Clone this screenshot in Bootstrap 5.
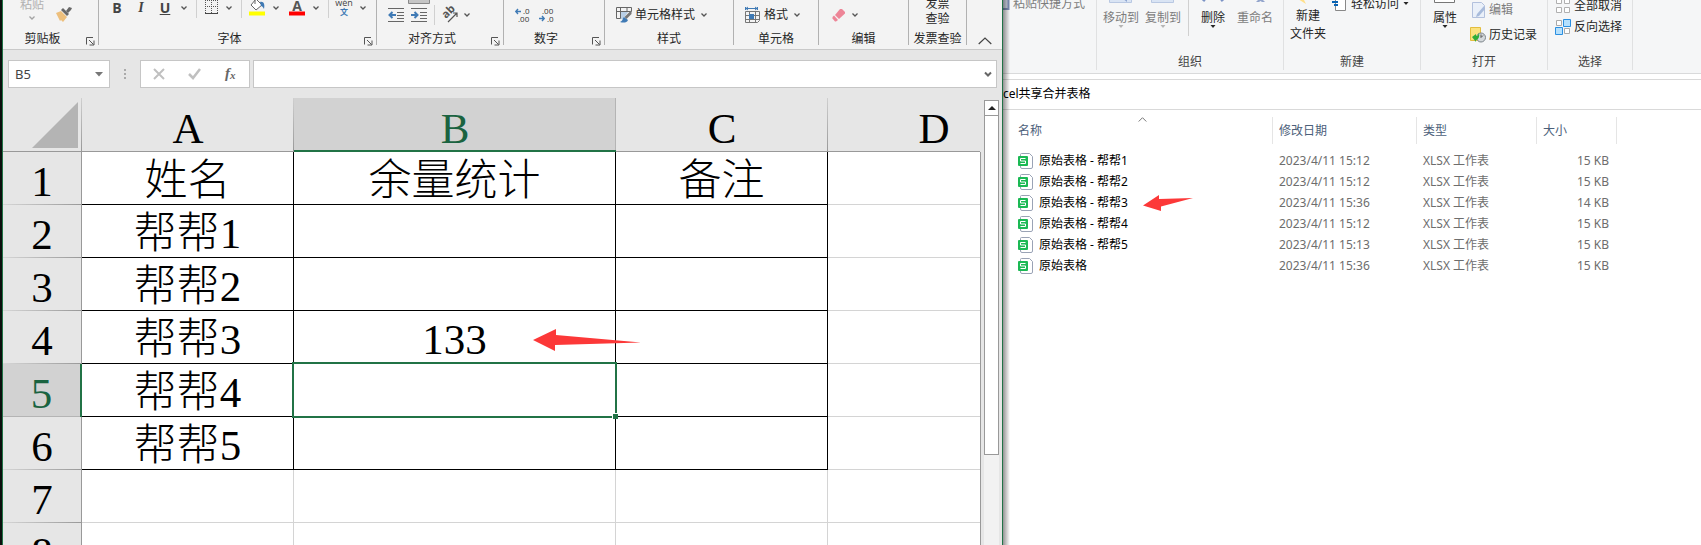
<!DOCTYPE html>
<html lang="zh-CN">
<head>
<meta charset="utf-8">
<meta name="viewport" content="width=device-width, initial-scale=1">
<title>Excel共享合并表格</title>
<link rel="stylesheet" href="https://cdn.jsdelivr.net/npm/bootstrap@5.3.0/dist/css/bootstrap.min.css">
<style>
  body { font-family: "Noto Sans", "Noto Sans CJK SC", sans-serif; font-size: 12px; line-height: 18px; color: #262626; background: #fff; }
  svg { display: block; flex: none; overflow: visible; }
  button { border: 0; padding: 0; background: none; color: inherit; white-space: nowrap; }
  .desktop { display: grid; grid-template-columns: minmax(0, 1003fr) minmax(0, 698fr); height: 100vh; overflow: hidden; }

  /* spreadsheet window */
  .book { border-left: 1px solid #1f7246; border-right: 1px solid #1f7246; margin-left: 2px; background: #e6e6e6; overflow: hidden; }
  .strip { background: #0b0f0d; }
  .ribbon { display: grid; grid-template-columns: 96fr 278fr 127fr 101fr 129fr 85fr 90fr 58fr 35fr; height: 50px; background: #f3f3f3; border-bottom: 1px solid #c9c9c9; }
  .grp { display: flex; flex-direction: column; min-width: 0; height: 45px; border-right: 1px solid #b1b1b1; }
  .grp:last-child { border: 0; }
  .tools { display: flex; align-items: center; height: 30px; flex: none; padding-left: 11px; gap: 8px; }
  .tools.upper { height: 15px; padding-left: 9px; gap: 6px; margin-bottom: 15px; }
  .tools.cutoff { height: 22px; align-items: flex-end; margin-bottom: 8px; }
  .tools.clip { padding-left: 17px; gap: 12px; }
  .tools.stack { height: 26px; padding: 0; margin-bottom: 4px; line-height: 15px; justify-content: center; }
  .cap { position: relative; text-align: center; line-height: 18px; height: 18px; }
  .cap svg { position: absolute; right: 3px; bottom: 2px; }
  .split { display: flex; align-items: center; gap: 3px; }
  .upper .split { gap: 4px; }
  .glyph { width: 18px; font: bold 14px/15px "Open Sans", sans-serif; color: #444; text-align: center; }
  .vsep { width: 1px; height: 20px; background: #d0d0d0; flex: none; }
  .upper .vsep { height: 18px; align-self: flex-end; margin-bottom: -3px; }

  .fbar { display: flex; align-items: stretch; height: 48px; padding: 10px 5px; }
  .fbox { border: 1px solid #c6c6c6; background: #fff; border-radius: 0; }
  .namebox { width: 102px; display: flex; align-items: center; padding-right: 6px; }
  .namebox input { border: 0; padding: 0 0 0 6px; min-width: 0; flex: 1; font-size: 13px; color: #444; background: none; }
  .fbtns { width: 110px; display: flex; align-items: center; justify-content: space-between; padding: 0 12px; }
  .finput { flex: 1; min-width: 0; display: flex; align-items: center; padding-right: 4px; margin-left: 3px; }
  .finput input { border: 0; flex: 1; min-width: 0; }
  input:focus { outline: 0; }

  .sheetwrap { display: flex; height: calc(100vh - 98px); }
  .sheet { flex: 1; min-width: 0; overflow: hidden; background: #fff; }
  .cells { table-layout: fixed; width: 1037px; border-collapse: separate; border-spacing: 0; font-family: "Liberation Serif", "Noto Sans CJK SC", serif; font-size: 43px; line-height: 52px; font-weight: 300; color: #000; text-align: center; }
  .cells th, .cells td { position: relative; height: 53px; padding: 0; font-weight: 300; border-right: 1px solid #d4d4d4; border-bottom: 1px solid #d4d4d4; }
  .cells td > span, .cells tbody th > span { display: block; height: 52px; line-height: 58px; white-space: nowrap; }
  .cells th { background: #e6e6e6; font-weight: 400; }
  .cells thead th { height: 54px; border-bottom-color: #999; border-right: 0; }
  .cells thead th > span { display: block; height: 53px; line-height: 61px; }
  .cells thead th { background: linear-gradient(#cfcfcf, #999) right / 1px 100% no-repeat, #e6e6e6; }
  .cells tbody th { border-right-color: #999; border-bottom: 0; background: linear-gradient(90deg, #d6d6d6, #999) bottom / 100% 1px no-repeat, #e6e6e6; }
  .cells .inked td:nth-child(-n+4) { border-color: #000; }
  .cells thead th.hot { background: linear-gradient(#b4b4b4, #b4b4b4) right / 1px 100% no-repeat, #d2d2d2; color: #1a6340; border-bottom: 2px solid #217346; }
  .cells thead th.hot > span { height: 52px; }
  .cells tbody th.hot { background: linear-gradient(#b4b4b4, #b4b4b4) bottom / 100% 1px no-repeat, #d2d2d2; color: #1a6340; border-right: 2px solid #217346; }
  .cells thead th.corner::after { content: ""; position: absolute; right: 4px; bottom: 3px; width: 46px; height: 46px; background: #b4b4b4; clip-path: polygon(100% 0, 100% 100%, 0 100%); }
  .active::before { content: ""; position: absolute; inset: -2px; border: 2px solid #217346; z-index: 1; }
  .active::after { content: ""; position: absolute; right: -3px; bottom: -3px; width: 5px; height: 5px; background: #217346; box-shadow: -1px -1px 0 #fff; z-index: 2; }
  .mark-b { position: absolute; right: -26px; top: 18px; z-index: 3; }
  .rail { width: 22px; padding: 2px 4px 0; background: linear-gradient(#999, #999) 0 54px / 1px 100% no-repeat, #e6e6e6; display: flex; flex-direction: column; }
  .rail > * { width: 15px; }
  .up { height: 16px; border: 1px solid #999; background: #fff; display: flex; align-items: center; justify-content: center; flex: none; }
  .track { flex: 1; background: #f2f2f2; }
  .thumb { height: 79%; background: #fff; border: 1px solid #999; border-top: 0; }

  /* file manager window */
  .files { position: relative; background: #fff; overflow: hidden; }
  .files::before { content: ""; position: absolute; inset: 0 auto 0 0; width: 7px; background: linear-gradient(90deg, rgba(0,0,0,.42), rgba(0,0,0,0)); z-index: 2; }
  .fribbon { display: grid; grid-template-columns: 94fr 187fr 137fr 127fr 85fr 68fr; height: 74px; background: #f5f6f7; border-bottom: 1px solid #d9dadb; }
  .fgrp { height: 70px; min-width: 0; border-right: 1px solid #e0e1e2; display: flex; flex-direction: column; }
  .fgrp:last-child { border: 0; }
  .fbody { display: flex; align-items: flex-end; height: 43px; flex: none; gap: 6px; padding-left: 6px; margin-bottom: 10px; }
  .fbody.open { gap: 13px; padding-left: 12px; }
  .fbody.pick { padding: 0 0 8px 7px; }
  .fbody .vsep { height: 36px; margin: 0 0 7px 1px; }
  .fcap { text-align: center; color: #444; line-height: 18px; }
  .tall { display: flex; flex-direction: column; align-items: center; line-height: 14px; margin-bottom: 14px; }
  .tall svg:first-child { margin-bottom: 8px; }
  .tall.two { line-height: 18px; margin-bottom: 0; }
  .tall.two svg:first-child { margin-bottom: 3px; }
  .tall.bare { margin-bottom: 18px; }
  .tall.wide { width: 36px; }
  .line { display: flex; align-items: center; gap: 3px; line-height: 17px; height: 17px; }
  .raised { margin-bottom: 31px; }
  .off { color: #7d7d7d; }
  .off svg:last-child { color: #b5b5b5; }
  .addr { margin-top: 5px; height: 31px; border: solid #d9d9d9; border-width: 1px 0; line-height: 28px; color: #000; white-space: nowrap; }
  .listing { table-layout: fixed; width: 100%; color: #6d6d6d; border-collapse: collapse; }
  .listing th { position: relative; height: 40px; padding: 2px 0 0 6px; font-weight: 400; color: #4c607a; background: linear-gradient(#e5e5e5, #e5e5e5) right / 1px 27px no-repeat; }
  .listing th:first-child { padding-left: 15px; }
  .listing th:last-child { background: none; }
  .listing td { height: 21px; padding: 0 0 0 6px; line-height: 20px; white-space: nowrap; }
  .listing td:first-child { padding-left: 15px; color: #000; }
  .listing td:nth-child(4) { text-align: right; padding-right: 8px; }
  .entry { display: flex; align-items: center; height: 20px; gap: 5px; }
  .entry a { color: inherit; text-decoration: none; }
  .entry .pointer { margin-left: 10px; }
  .caret-up { position: absolute; left: 135px; top: 7px; }
</style>
</head>
<body>
<svg width="0" height="0" class="position-absolute" aria-hidden="true">
  <defs>
    <symbol id="chev" viewBox="0 0 12 8"><path d="M3.500 2.500 6 5l2.500-2.500" fill="none" stroke="#555" stroke-width="1.300"/></symbol>
    <symbol id="launch" viewBox="0 0 9 9"><path d="M.5 7.500V.5H7M3 3l4.500 4.500M8 3.500V8H3.500" fill="none" stroke="#555"/></symbol>
    <symbol id="tri" viewBox="0 0 8 4"><path d="M1.500 0h5L4 3z" fill="currentColor"/></symbol>
    <symbol id="wps" viewBox="0 0 16 16"><path d="M3.500.5h8l3 3v10.500q0 1.500-1.500 1.500h-9q-1.500 0-1.500-1.500V1.500q0-1 1-1z" fill="#fff" stroke="#9aa3b5"/><rect y="3" width="10" height="10" rx="1" fill="#1bb954"/><path d="M7.500 5.500h-5V8h5v2.500h-5" fill="none" stroke="#fff"/></symbol>
  </defs>
</svg>

<div class="desktop">
  <div class="strip">
  <main class="book h-100">
    <div class="ribbon">
      <section class="grp">
        <div class="tools cutoff clip">
          <button class="d-flex flex-column align-items-center" style="color:#b1b1b1"><span>粘贴</span><svg width="12" height="8" opacity=".5"><use href="#chev"/></svg></button>
          <button aria-label="格式刷"><svg width="16" height="16" viewBox="0 0 16 16"><path d="M0 7l5-2 6 6-4 5-2-2-1 1z" fill="#edbf7c"/><path d="M5 4l2-2 6 6-2 2z" fill="#686868"/><path d="M10 5l3-4 3 1-1 2-3 3z" fill="#686868"/></svg></button>
        </div>
        <div class="cap pe-3">剪贴板<svg width="9" height="9"><use href="#launch"/></svg></div>
      </section>
      <section class="grp">
        <div class="tools upper">
          <button class="glyph">B</button>
          <button class="glyph fst-italic" style="font-family:'Liberation Serif',serif">I</button>
          <span class="split"><button class="glyph text-decoration-underline">U</button><button aria-label="下划线选项"><svg width="12" height="8"><use href="#chev"/></svg></button></span>
          <i class="vsep"></i>
          <span class="split"><button aria-label="边框"><svg width="16" height="15" viewBox="0 0 16 15"><path d="M2.500 0v13M8.500 0v13M14.500 0v13M2 6.500h13M2 .5h13" stroke="#555" stroke-dasharray="1 1" fill="none"/><path d="M2 13.500h13" stroke="#444"/></svg></button><button aria-label="边框选项"><svg width="12" height="8"><use href="#chev"/></svg></button></span>
          <i class="vsep"></i>
          <span class="split"><button aria-label="填充颜色"><svg width="18" height="15" viewBox="0 0 18 15"><path d="M8-1l6 6-6 5-5-5z" fill="#fff" stroke="#666"/><path d="M7 4V-2" stroke="#666"/><path d="M12 2c4-1 5 3 4 7-1-2-2-3-3-3z" fill="#3f7ab5"/><path d="M1 11.500h16v4H1z" fill="#ff0"/></svg></button><button aria-label="填充选项"><svg width="12" height="8"><use href="#chev"/></svg></button></span>
          <span class="split"><button aria-label="字体颜色"><svg width="18" height="15" viewBox="0 0 18 15"><text x="9" y="11" text-anchor="middle" font-size="14" font-family="Open Sans" font-weight="700" fill="#555">A</text><path d="M1 11.500h16v4H1z" fill="red"/></svg></button><button aria-label="颜色选项"><svg width="12" height="8"><use href="#chev"/></svg></button></span>
          <i class="vsep"></i>
          <span class="split"><button aria-label="拼音"><svg width="18" height="15" viewBox="0 0 18 15"><text x="9" y="6" text-anchor="middle" font-size="9" font-family="Open Sans" fill="#444">wén</text><text x="9" y="15" text-anchor="middle" font-size="8" font-weight="700" font-family="Noto Sans CJK SC" fill="#3f7ab5">文</text></svg></button><button aria-label="拼音选项"><svg width="12" height="8"><use href="#chev"/></svg></button></span>
        </div>
        <div class="cap pe-3">字体<svg width="9" height="9"><use href="#launch"/></svg></div>
      </section>
      <section class="grp">
        <div class="tools" style="gap:7px">
          <button aria-label="减少缩进"><svg width="16" height="14" viewBox="0 0 16 14"><path d="M0 .5h16M9 4.500h7M9 7.500h7M9 10.500h7M0 13.500h16" stroke="#666"/><path d="M8 7H2M4.500 4L1.500 7l3 3" stroke="#3f7ab5" stroke-width="2" fill="none"/></svg></button>
          <button aria-label="增加缩进"><svg width="16" height="14" viewBox="0 0 16 14"><path d="M-2.500-12h21v7.500h-21z" fill="#c5c5c5" stroke="#888"/><path d="M0 .5h16M9 4.500h7M9 7.500h7M9 10.500h7M0 13.500h16" stroke="#666"/><path d="M0 7h6M3.500 4l3 3-3 3" stroke="#3f7ab5" stroke-width="2" fill="none"/></svg></button>
          <i class="vsep"></i>
          <span class="split"><button aria-label="方向"><svg width="16" height="14" viewBox="0 0 16 14"><text transform="translate(4 11) rotate(-45)" font-size="11" font-weight="700" font-family="Open Sans" fill="#555">ab</text><path d="M6 14l9-9M11 5h4v4" fill="none" stroke="#555" stroke-width="1.200"/></svg></button><button aria-label="方向选项"><svg width="12" height="8"><use href="#chev"/></svg></button></span>
        </div>
        <div class="cap pe-3">对齐方式<svg width="9" height="9"><use href="#launch"/></svg></div>
      </section>
      <section class="grp">
        <div class="tools">
          <button aria-label="增加小数位数"><svg width="16" height="14" viewBox="0 0 16 14" font-size="8" font-family="Open Sans" fill="#333"><text x="8" y="6">.0</text><text x="3" y="14">.00</text><path d="M6 3.500H1M3 1L.8 3.500 3 6" stroke="#3f7ab5" stroke-width="1.400" fill="none"/></svg></button>
          <button aria-label="减少小数位数"><svg width="16" height="14" viewBox="0 0 16 14" font-size="8" font-family="Open Sans" fill="#333"><text x="3" y="6">.00</text><text x="8" y="14">.0</text><path d="M0 10.500h5M3 8l2.200 2.500L3 13" stroke="#3f7ab5" stroke-width="1.400" fill="none"/></svg></button>
        </div>
        <div class="cap pe-3">数字<svg width="9" height="9"><use href="#launch"/></svg></div>
      </section>
      <section class="grp">
        <div class="tools">
          <button class="split"><svg width="16" height="16" viewBox="0 0 16 16"><path d="M.5.5h15v4M.5.5v11h4M.5 4.500h15M4.500.5v11M11 .5v4" fill="none" stroke="#666"/><path d="M5 5h7l-5 7H5z" fill="#b9cfe6"/><path d="M15.500 3v4l-5 5-2-2z" fill="#777"/><path d="M8 10l4 3c-1 3-5 3-8 2 3-1 2-3 4-5z" fill="#3f7ab5"/></svg><span>单元格样式</span><svg width="12" height="8"><use href="#chev"/></svg></button>
        </div>
        <div class="cap">样式</div>
      </section>
      <section class="grp">
        <div class="tools">
          <button class="split"><svg width="16" height="16" viewBox="0 0 16 16"><path d="M.5 0v3M12.500 0v3M1 1.500h11M3 0L1 1.500 3 3M10 0l2 1.500L10 3" stroke="#3f7ab5" fill="none"/><path d="M.5 4.500h14v9l-2 2H.5zM.5 8.500h14M.5 12.500h14M4.500 4.500v11M10.500 4.500v11" fill="none" stroke="#777"/><path d="M4 7h5v5H4z" fill="#3f7ab5"/></svg><span>格式</span><svg width="12" height="8"><use href="#chev"/></svg></button>
        </div>
        <div class="cap">单元格</div>
      </section>
      <section class="grp">
        <div class="tools">
          <button class="split" aria-label="清除"><svg width="16" height="14" viewBox="0 0 16 14"><path d="M10 1h2l3 3v1.500L9 11 5 7z" fill="#ed8597"/><path d="M4 7.500L8 12l-2 1.500H5L2.500 10.500V9z" fill="#ed8597"/></svg><svg width="12" height="8"><use href="#chev"/></svg></button>
        </div>
        <div class="cap">编辑</div>
      </section>
      <section class="grp">
        <div class="tools cutoff stack"><button>发票<br>查验</button></div>
        <div class="cap">发票查验</div>
      </section>
      <section class="grp justify-content-end align-items-center"><button aria-label="折叠功能区"><svg width="14" height="8" viewBox="0 0 14 8"><path d="M.7 7L7 1l6.300 6" fill="none" stroke="#444" stroke-width="1.200"/></svg></button></section>
    </div>

    <div class="fbar">
      <div class="fbox namebox"><input aria-label="名称框" value="B5"><svg width="8" height="5"><path d="M0 0h8L4 4.500z" fill="#777"/></svg></div>
      <svg class="align-self-center" width="30" height="12" viewBox="0 0 30 12"><path d="M14 1h2v2h-2zM14 5h2v2h-2zM14 9h2v2h-2z" fill="#aaa"/></svg>
      <div class="fbox fbtns">
        <button aria-label="取消"><svg width="12" height="12"><path d="M1 1l10 10M11 1L1 11" stroke="#c0c0c0" stroke-width="2"/></svg></button>
        <button aria-label="输入"><svg width="13" height="12"><path d="M1 6l4 4 7-9" fill="none" stroke="#c0c0c0" stroke-width="2.500"/></svg></button>
        <button aria-label="插入函数"><svg width="14" height="14" viewBox="0 0 14 14" font-family="Liberation Serif" font-style="italic" font-weight="700" fill="#666"><text x="2" y="11" font-size="15">f</text><text x="7" y="12" font-size="11">x</text></svg></button>
      </div>
      <div class="fbox finput"><input aria-label="编辑栏"><svg width="8" height="7"><path d="M1 1.500l3 3 3-3" fill="none" stroke="#666" stroke-width="2"/></svg></div>
    </div>

    <div class="sheetwrap">
      <div class="sheet">
        <table class="cells">
          <colgroup><col style="width:79px"><col style="width:212px"><col style="width:322px"><col style="width:212px"><col style="width:212px"></colgroup>
          <thead><tr><th class="corner"></th><th><span>A</span></th><th class="hot"><span>B</span></th><th><span>C</span></th><th><span>D</span></th></tr></thead>
          <tbody>
            <tr class="inked"><th><span>1</span></th><td><span>姓名</span></td><td><span>余量统计</span></td><td><span>备注</span></td><td></td></tr>
            <tr class="inked"><th><span>2</span></th><td><span>帮帮1</span></td><td></td><td></td><td></td></tr>
            <tr class="inked"><th><span>3</span></th><td><span>帮帮2</span></td><td></td><td></td><td></td></tr>
            <tr class="inked"><th><span>4</span></th><td><span>帮帮3</span></td><td><span>133</span><svg class="mark-b" width="108" height="22" viewBox="0 0 108 22"><path d="M0 11L23 0v6l85 7.500L22 16v6z" fill="#fc3838"/></svg></td><td></td><td></td></tr>
            <tr class="inked"><th class="hot"><span>5</span></th><td><span>帮帮4</span></td><td class="active"></td><td></td><td></td></tr>
            <tr class="inked"><th><span>6</span></th><td><span>帮帮5</span></td><td></td><td></td><td></td></tr>
            <tr><th><span>7</span></th><td></td><td></td><td></td><td></td></tr>
            <tr><th><span>8</span></th><td></td><td></td><td></td><td></td></tr>
          </tbody>
        </table>
      </div>
      <div class="rail">
        <button class="up" aria-label="向上滚动"><svg width="8" height="4"><path d="M0 4l4-4 4 4z" fill="#222"/></svg></button>
        <div class="track"><div class="thumb"></div></div>
      </div>
    </div>
  </main>
  </div>

  <aside class="files">
    <div class="fribbon">
      <section class="fgrp">
        <div class="fbody ps-0"><button class="line raised off"><svg width="7" height="16" viewBox="0 0 7 16"><path d="M0 0h5.500v13H0" fill="#d5dcec" stroke="#7f90b8" stroke-width="2"/></svg><span>粘贴快捷方式</span></button></div>
      </section>
      <section class="fgrp">
        <div class="fbody">
          <button class="tall off"><svg width="24" height="16" viewBox="0 0 24 16"><path d="M.5 0h22v15.500H.5z" fill="#d9e4f4" stroke="#b9c8e2"/><path d="M13 11h5v4z" fill="#8ea6d2"/></svg><span>移动到</span><svg width="8" height="4"><use href="#tri"/></svg></button>
          <button class="tall off"><svg width="24" height="16" viewBox="0 0 24 16"><path d="M.5 0h22v15.500H.5z" fill="#d9e4f4" stroke="#b9c8e2"/><path d="M9 12.500h10" stroke="#b9c8e2"/></svg><span>复制到</span><svg width="8" height="4"><use href="#tri"/></svg></button>
          <i class="vsep"></i>
          <button class="tall wide"><svg width="24" height="16" viewBox="0 0 24 16"><path d="M2 14L12 2l10 12" fill="none" stroke="#7b93c5" stroke-width="3"/></svg><span>删除</span><svg width="8" height="4"><use href="#tri"/></svg></button>
          <button class="tall bare off"><svg width="24" height="16" viewBox="0 0 24 16"><path d="M16 0h3v12l3 3h-3l-1.500-1-1.500 1h-3l3-3z" fill="#93a5cc"/></svg><span>重命名</span></button>
        </div>
        <div class="fcap">组织</div>
      </section>
      <section class="fgrp">
        <div class="fbody">
          <button class="tall two"><svg width="24" height="16" viewBox="0 0 24 16"><path d="M5 6l5 10-8-5z" fill="#ffe08a"/></svg><span>新建<br>文件夹</span></button>
          <button class="line raised"><svg width="16" height="17" viewBox="0 0 16 17"><path d="M3.500 0h10v15.500h-10z" fill="#fff" stroke="#888"/><path d="M0 7h6M2 10h4" stroke="#0a64b4" stroke-width="2"/></svg><span>轻松访问</span><svg width="8" height="4"><use href="#tri"/></svg></button>
        </div>
        <div class="fcap">新建</div>
      </section>
      <section class="fgrp">
        <div class="fbody open">
          <button class="tall"><svg width="22" height="16" viewBox="0 0 22 16"><path d="M.5 0h20v15.500H.5z" fill="#fff" stroke="#777"/></svg><span>属性</span><svg width="8" height="4"><use href="#tri"/></svg></button>
          <div class="d-flex flex-column gap-2">
            <button class="line off"><svg width="16" height="16" viewBox="0 0 16 16"><path d="M2.500.5h9l3 3v12h-12z" fill="#eaf0f9" stroke="#b3c1dd"/><path d="M14 4l-7 8-1 3 3-1 6-7z" fill="#a8bbdb"/></svg><span>编辑</span></button>
            <button class="line"><svg width="16" height="16" viewBox="0 0 16 16"><path d="M.5.5h10v13H.5z" fill="#fbe27e" stroke="#e3bd3f"/><circle cx="11" cy="10.500" r="4.500" fill="#d5d9dc" stroke="#7d858b"/><path d="M11 7.500v3l2-2" fill="none" stroke="#555"/><path d="M2 10l4-3v2c2 0 2-1 3-3 1 4-1 7-3 7v2z" fill="#2fae3a"/></svg><span>历史记录</span></button>
          </div>
        </div>
        <div class="fcap">打开</div>
      </section>
      <section class="fgrp">
        <div class="fbody pick">
          <div class="d-flex flex-column gap-1">
            <button class="line"><svg width="16" height="16" viewBox="0 0 16 16" fill="#fff" stroke="#b0b0b0"><path d="M1.500.5h5v5h-5zM9.500.5h5v5h-5zM1.500 9.500h5v5h-5zM9.500 9.500h5v5h-5z"/></svg><span>全部取消</span></button>
            <button class="line"><svg width="16" height="16" viewBox="0 0 16 16"><path d="M1.500 1.500h5v5h-5zM9.500 9.500h5v5h-5z" fill="#fff" stroke="#aaa"/><path d="M8.500.5h7v7h-7zM.5 8.500h7v7h-7z" fill="#b5e0fd" stroke="#2b8fe0"/></svg><span>反向选择</span></button>
          </div>
        </div>
        <div class="fcap">选择</div>
      </section>
      <section class="fgrp"></section>
    </div>
    <div class="addr">cel共享合并表格</div>
    <table class="listing">
      <colgroup><col style="width:270px"><col style="width:144px"><col style="width:120px"><col style="width:80px"><col></colgroup>
      <thead><tr><th>名称<svg class="caret-up" width="9" height="5"><path d="M.7 4.500l3.800-3.800 3.800 3.800" fill="none" stroke="#777"/></svg></th><th>修改日期</th><th>类型</th><th>大小</th><th></th></tr></thead>
      <tbody>
        <tr><td><div class="entry"><svg width="16" height="16"><use href="#wps"/></svg><a href="#">原始表格 - 帮帮1</a></div></td><td>2023/4/11 15:12</td><td>XLSX 工作表</td><td>15 KB</td><td></td></tr>
        <tr><td><div class="entry"><svg width="16" height="16"><use href="#wps"/></svg><a href="#">原始表格 - 帮帮2</a></div></td><td>2023/4/11 15:12</td><td>XLSX 工作表</td><td>15 KB</td><td></td></tr>
        <tr><td><div class="entry"><svg width="16" height="16"><use href="#wps"/></svg><a href="#">原始表格 - 帮帮3</a><svg class="pointer" width="50" height="16" viewBox="0 0 50 16"><path d="M0 10.500L16 0v4l34-1-32 8.500V16z" fill="#fc3838"/></svg></div></td><td>2023/4/11 15:36</td><td>XLSX 工作表</td><td>14 KB</td><td></td></tr>
        <tr><td><div class="entry"><svg width="16" height="16"><use href="#wps"/></svg><a href="#">原始表格 - 帮帮4</a></div></td><td>2023/4/11 15:12</td><td>XLSX 工作表</td><td>15 KB</td><td></td></tr>
        <tr><td><div class="entry"><svg width="16" height="16"><use href="#wps"/></svg><a href="#">原始表格 - 帮帮5</a></div></td><td>2023/4/11 15:13</td><td>XLSX 工作表</td><td>15 KB</td><td></td></tr>
        <tr><td><div class="entry"><svg width="16" height="16"><use href="#wps"/></svg><a href="#">原始表格</a></div></td><td>2023/4/11 15:36</td><td>XLSX 工作表</td><td>15 KB</td><td></td></tr>
      </tbody>
    </table>
  </aside>
</div>
<script src="https://cdn.jsdelivr.net/npm/bootstrap@5.3.0/dist/js/bootstrap.bundle.min.js"></script>
</body>
</html>
